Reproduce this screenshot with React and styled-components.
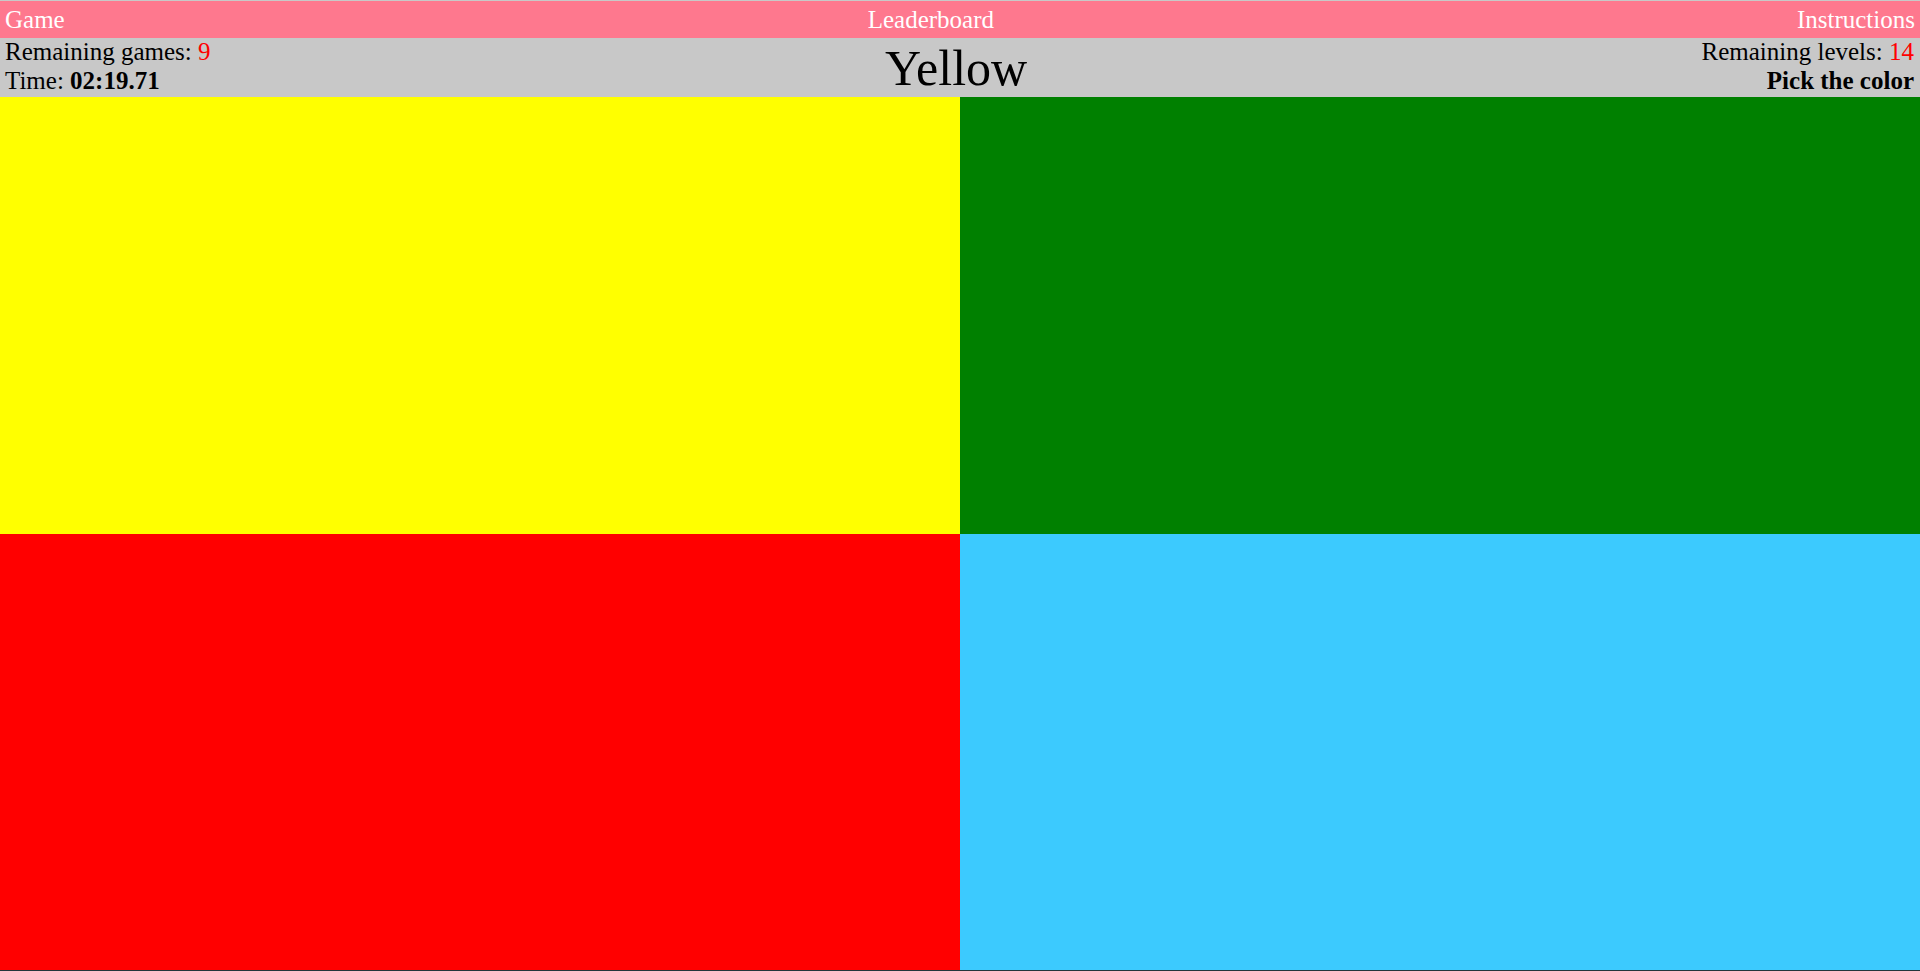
import React from 'react'
import styled, { createGlobalStyle } from 'styled-components'

const GlobalStyle = createGlobalStyle`
  html, body {
    margin: 0;
    padding: 0;
    background: #c8c8c8;
    font-family: "Liberation Serif", "Times New Roman", serif;
    overflow: hidden;
  }
`

const Page = styled.div`
  height: 971px;
  display: flex;
  flex-direction: column;
  padding-top: 1px;
  box-sizing: border-box;
`

const Nav = styled.nav`
  display: flex;
  justify-content: space-between;
  align-items: center;
  height: 37px;
  padding: 0 5px;
  background: #fe788e;
  color: #ffffff;
  font-size: 25px;
`

const NavLink = styled.span`
  cursor: pointer;
  line-height: 28px;
`

const Status = styled.header`
  display: flex;
  justify-content: space-between;
  align-items: flex-start;
  height: 59px;
  padding: 0 6px 0 5px;
  background: #c8c8c8;
  color: #000000;
  font-size: 25px;
  line-height: 28.5px;
`

const Side = styled.div`
  display: flex;
  flex-direction: column;
  align-items: ${p => (p.$right ? 'flex-end' : 'flex-start')};
`

const Count = styled.span`
  color: #ff0000;
`

const Strong = styled.b`
  font-weight: bold;
`

const Target = styled.div`
  font-size: 50px;
  line-height: 57px;
  padding-top: 2px;
`

const Board = styled.main`
  flex: 1;
  display: grid;
  grid-template-columns: 1fr 1fr;
  grid-template-rows: 437px 436px;
  border-bottom: 1px solid #22363c;
`

const Tile = styled.button`
  border: none;
  margin: 0;
  padding: 0;
  cursor: pointer;
  background: ${p => p.$color};
`

const tiles = ['#ffff00', '#008000', '#ff0000', '#3ccafe']

const App = () => {
  return (
    <>
      <GlobalStyle />
      <Page>
        <Nav>
          <NavLink>Game</NavLink>
          <NavLink>Leaderboard</NavLink>
          <NavLink>Instructions</NavLink>
        </Nav>

        <Status>
          <Side>
            <span>Remaining games: <Count>9</Count></span>
            <span>Time: <Strong>02:19.71</Strong></span>
          </Side>
          <Target>Yellow</Target>
          <Side $right>
            <span>Remaining levels: <Count>14</Count></span>
            <Strong>Pick the color</Strong>
          </Side>
        </Status>

        <Board>
          {tiles.map(color => (
            <Tile key={color} $color={color} aria-label={color} />
          ))}
        </Board>
      </Page>
    </>
  )
}

export default App
